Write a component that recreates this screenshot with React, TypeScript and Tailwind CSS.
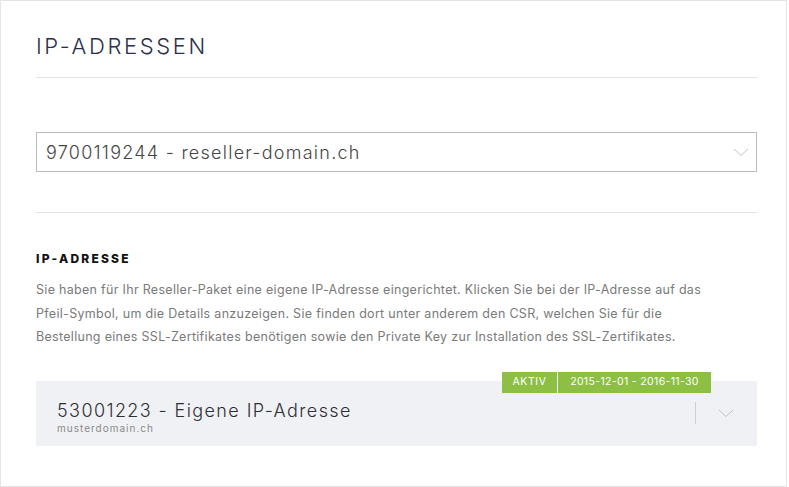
import React from "react";

const Chevron = ({ className = "" }: { className?: string }) => (
  <svg width="16" height="9" viewBox="0 0 16 9" className={className} fill="none">
    <path d="M1 1l7 6.5L15 1" stroke="#c4c4c8" strokeWidth="1" />
  </svg>
);

export default function App() {
  return (
    <div className="w-[789px] h-[487px] bg-white" style={{ fontFamily: "Inter, 'Liberation Sans', sans-serif" }}>
      <div className="w-[787px] h-[487px] border border-[#e4e4e4] pl-[35px] pr-[29px] pt-[31px]">
        <h1 className="text-[22px] leading-[28px] font-light tracking-[2.6px] text-[#2c2f4b]">IP-ADRESSEN</h1>
        <div className="mt-[17px] border-t border-[#e3e3e3]" />
        <div className="mt-[54px] h-[40px] border border-[#bcbcbc] flex items-center justify-between pl-[9px] pr-[7px]">
          <span className="text-[18px] font-light text-[#454545] tracking-[1.25px]">9700119244 - reseller-domain.ch</span>
          <Chevron />
        </div>
        <div className="mt-[40px] border-t border-[#e3e3e3]" />
        <h2 className="mt-[39px] text-[12px] leading-[14px] font-extrabold tracking-[2.2px] text-[#111]">IP-ADRESSE</h2>
        <p className="mt-[12px] max-w-[680px] text-[12.5px] leading-[23.5px] text-[#7a7a7a] tracking-[0.3px]">
          Sie haben für Ihr Reseller-Paket eine eigene IP-Adresse eingerichtet. Klicken Sie bei der IP-Adresse auf das Pfeil-Symbol, um die Details anzuzeigen. Sie finden dort unter anderem den CSR, welchen Sie für die Bestellung eines SSL-Zertifikates benötigen sowie den Private Key zur Installation des SSL-Zertifikates.
        </p>
        <div className="relative mt-[32px] h-[65px] bg-[#f0f1f4] flex items-center pl-[21px] pr-[23px]">
          <div className="absolute top-[-9px] left-[466px] flex h-[21px] text-white text-[10.5px] tracking-[0.6px]">
            <div className="bg-[#8dbf45] w-[55px] flex items-center justify-center">AKTIV</div>
            <div className="w-[1px]" />
            <div className="bg-[#8dbf45] w-[153px] flex items-center justify-center tracking-[0.35px]">2015-12-01 - 2016-11-30</div>
          </div>
          <div className="flex-1 flex flex-col pt-[8px]">
            <span className="text-[18px] leading-[22px] font-light text-[#2e2e36] tracking-[1.4px]">53001223 - Eigene IP-Adresse</span>
            <span className="text-[10px] leading-[12px] text-[#8a8a8a] tracking-[1px]">musterdomain.ch</span>
          </div>
          <div className="w-px h-[22px] bg-[#cfcfd3] mr-[22px]" />
          <Chevron />
        </div>
      </div>
    </div>
  );
}
